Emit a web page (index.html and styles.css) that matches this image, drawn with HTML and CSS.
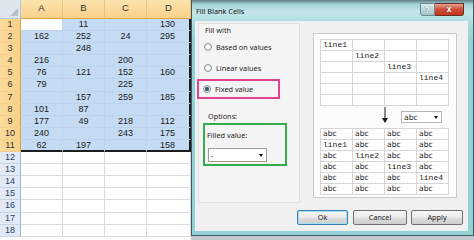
FILE: index.html
```html
<!DOCTYPE html>
<html>
<head>
<meta charset="utf-8">
<link rel="stylesheet" href="styles.css">
</head>
<body>
<div class="screen">
  <div class="sheet">
    <div class="corner"></div>
    <div class="ch">A</div><div class="ch">B</div><div class="ch">C</div><div class="ch">D</div>

    <div class="rh">1</div><div class="c s act"></div><div class="c s">11</div><div class="c s"></div><div class="c s r">130</div>
    <div class="rh">2</div><div class="c s">162</div><div class="c s">252</div><div class="c s">24</div><div class="c s r">295</div>
    <div class="rh">3</div><div class="c s"></div><div class="c s">248</div><div class="c s"></div><div class="c s r"></div>
    <div class="rh">4</div><div class="c s">216</div><div class="c s"></div><div class="c s">200</div><div class="c s r"></div>
    <div class="rh">5</div><div class="c s">76</div><div class="c s">121</div><div class="c s">152</div><div class="c s r">160</div>
    <div class="rh">6</div><div class="c s">79</div><div class="c s"></div><div class="c s">225</div><div class="c s r"></div>
    <div class="rh">7</div><div class="c s"></div><div class="c s">157</div><div class="c s">259</div><div class="c s r">185</div>
    <div class="rh">8</div><div class="c s">101</div><div class="c s">87</div><div class="c s"></div><div class="c s r"></div>
    <div class="rh">9</div><div class="c s">177</div><div class="c s">49</div><div class="c s">218</div><div class="c s r">112</div>
    <div class="rh">10</div><div class="c s">240</div><div class="c s"></div><div class="c s">243</div><div class="c s r">175</div>
    <div class="rh">11</div><div class="c s b">62</div><div class="c s b">197</div><div class="c s b"></div><div class="c s r b">158</div>
    <div class="rh u">12</div><div class="c"></div><div class="c"></div><div class="c"></div><div class="c"></div>
    <div class="rh u">13</div><div class="c"></div><div class="c"></div><div class="c"></div><div class="c"></div>
    <div class="rh u">14</div><div class="c"></div><div class="c"></div><div class="c"></div><div class="c"></div>
    <div class="rh u">15</div><div class="c"></div><div class="c"></div><div class="c"></div><div class="c"></div>
    <div class="rh u">16</div><div class="c"></div><div class="c"></div><div class="c"></div><div class="c"></div>
    <div class="rh u">17</div><div class="c"></div><div class="c"></div><div class="c"></div><div class="c"></div>
    <div class="rh u">18</div><div class="c"></div><div class="c"></div><div class="c"></div><div class="c"></div>
  </div>

  <div class="dlg">
    <div class="titlebar">
      <span class="title">Fill Blank Cells</span>
      <div class="caps"><span class="help">?</span><span class="close">x</span></div>
    </div>
    <div class="client">
      <div class="main">
        <div class="left">
          <div class="fw">Fill with</div>
          <div class="opt o1"><span class="rd"></span><span>Based on values</span></div>
          <div class="opt o2"><span class="rd"></span><span>Linear values</span></div>
          <div class="pink"><span class="rd on"></span><span>Fixed value</span></div>
          <div class="opts">Options:</div>
          <div class="green">
            <div class="flab">Filled value:</div>
            <div class="dd fdd"><span>-</span><span class="tri"></span></div>
          </div>
        </div>
        <div class="preview">
          <div class="tbl">
            <span class="m">line1</span><span></span><span></span><span></span>
            <span></span><span class="m">line2</span><span></span><span></span>
            <span></span><span></span><span class="m">line3</span><span></span>
            <span></span><span></span><span></span><span class="m">line4</span>
            <span></span><span></span><span></span><span></span>
            <span></span><span></span><span></span><span></span>
          </div>
          <div class="mid">
            <svg class="arrow" width="8" height="16" viewBox="0 0 8 16"><line x1="4" y1="0" x2="4" y2="12" stroke="#1a1a1a" stroke-width="1"/><polygon points="1,11 7,11 4,16" fill="#1a1a1a"/></svg>
            <div class="dd pdd"><span>abc</span><span class="tri"></span></div>
          </div>
          <div class="tbl">
            <span>abc</span><span>abc</span><span>abc</span><span>abc</span>
            <span class="m">line1</span><span>abc</span><span>abc</span><span>abc</span>
            <span>abc</span><span class="m">line2</span><span>abc</span><span>abc</span>
            <span>abc</span><span>abc</span><span class="m">line3</span><span>abc</span>
            <span>abc</span><span>abc</span><span>abc</span><span class="m">line4</span>
            <span>abc</span><span>abc</span><span>abc</span><span>abc</span>
          </div>
        </div>
      </div>
      <div class="buttons">
        <div class="btn def">Ok</div>
        <div class="btn cancel">Cancel</div>
        <div class="btn apply">Apply</div>
      </div>
    </div>
  </div>
</div>
</body>
</html>
```
FILE: styles.css
```css
* { box-sizing: border-box; margin: 0; padding: 0; }
body { margin: 0; width: 474px; height: 240px; overflow: hidden; background: #c4c9cd; }
.screen { display: flex; width: 474px; height: 240px; }

/* ---------- spreadsheet ---------- */
.sheet {
  width: 191px; height: 240px; flex: none;
  display: grid;
  grid-template-columns: 21px 42px 42px 42px 44px;
  grid-template-rows: 19px repeat(18, 12.1px);
  background: #fff;
  font-family: "Liberation Sans", Arial, sans-serif;
  font-size: 9px; color: #1a1a1a;
  overflow: hidden;
}
.corner { background: #dfe5ed; border-right: 1px solid #b5c3d4; border-bottom: 1px solid #b5c3d4; position: relative; }
.corner::after {
  content: ""; position: absolute; right: 2px; bottom: 2px; width: 0; height: 0;
  border-left: 8px solid transparent; border-bottom: 8px solid #b7c0ca;
}
.ch {
  background: linear-gradient(#fbe3ad, #f9d18b);
  border-right: 1px solid #e9c47a; border-bottom: 1px solid #d9a441;
  text-align: center; line-height: 16px; color: #333; font-size: 9.5px;
}
.rh {
  background: linear-gradient(90deg, #fbdc9c, #f8d086);
  border-right: 1px solid #d9a441; border-bottom: 1px solid #f3d08e;
  text-align: center; line-height: 11px; color: #333;
}
.rh.u { background: #e2eaf5; color: #27426d; border-bottom: 1px solid #c6d3e4; border-right: 1px solid #9fb5cf; }
.c { border-right: 1px solid #dadcdf; border-bottom: 1px solid #dadcdf; text-align: center; line-height: 11px; }
.c.s { background: #c5dbf3; border-color: #bed4ee; }
.c.s.act { background: #fff; }
.c.r { border-right-color: #1d1d1d; box-shadow: inset -1px 0 #1d1d1d; padding-right: 2px; }
.c.b { border-bottom-color: #1d1d1d; box-shadow: inset 0 -1px #1d1d1d; }
.c.r.b { box-shadow: inset -1px -1px #1d1d1d; }

/* ---------- dialog ---------- */
.dlg {
  width: 283px; height: 236px; flex: none;
  background: linear-gradient(#5d7a80 0, #9fd0d5 4px, #c6e7ea 12px, #acdce0 22px, #92d1d6 40px, #92d1d6 100%);
  border: 1px solid #3e5a5e; border-top: none;
  padding: 0 5px 4px 3px;
  display: flex; flex-direction: column;
  font-family: "Noto Sans", "DejaVu Sans", sans-serif;
  font-size: 7.3px; color: #1e1e1e;
}
.titlebar { height: 21px; display: flex; align-items: flex-start; flex: none; }
.title { padding: 6px 0 0 1px; line-height: 10px; color: #111; }
.caps { margin-left: auto; margin-top: 3px; margin-right: 4px; display: flex; }
.help {
  width: 15px; height: 13px; background: linear-gradient(#d6eaec, #a2c5c9);
  border: 1px solid #6a8b8f; border-radius: 0 0 0 3px;
  color: #fff; font-weight: bold; text-align: center; line-height: 11px; font-size: 8px;
  text-shadow: 0 0 1px #3b4b55;
}
.close {
  width: 29px; height: 13px; background: linear-gradient(#e9a495, #cc4a33 50%, #c23a22);
  border: 1px solid #6b2a20; border-left: none; border-radius: 0 0 3px 0;
  color: #fff; font-weight: bold; text-align: center; line-height: 10px; font-size: 8px;
  text-shadow: 0 0 1px #5a1a10;
}
.client { flex: 1; background: #f0f0f0; display: flex; flex-direction: column; }
.main { display: flex; padding-top: 2px; height: 182px; flex: none; }

.left { margin-left: 3px; width: 102px; height: 180px; border: 1px solid #e0e0e0; background: #f4f4f4; }
.fw { margin-top: 1px; padding-left: 6px; line-height: 10px; height: 10px; }
.opt { display: flex; align-items: center; gap: 4px; height: 10px; padding-left: 5px; }
.o1 { margin-top: 7px; }
.o2 { margin-top: 11px; }
.rd {
  width: 8px; height: 8px; border-radius: 50%; flex: none;
  border: 1px solid #8d9195;
  background: radial-gradient(circle, #ffffff 0, #e4e6e8 100%);
}
.rd.on { background: radial-gradient(circle, #2f5368 0, #3b6479 1.8px, #dfe6ea 2.4px, #eef1f3 100%); }
.pink {
  margin-top: 6px; margin-left: -2px; width: 83px; height: 20px;
  border: 2px solid #e2418f;
  display: flex; align-items: center; gap: 4px; padding-left: 4px;
}
.opts { margin-top: 12px; padding-left: 9px; line-height: 10px; height: 10px; }
.green {
  margin-top: 2px; margin-left: 4px; width: 84px; height: 43px;
  border: 2px solid #35ad4c;
}
.flab { margin-top: 5px; padding-left: 2px; line-height: 10px; height: 10px; }
.dd {
  display: flex; align-items: center; justify-content: space-between;
  background: #fff; border: 1px solid #ababab; padding: 0 3px 0 2px;
}
.fdd { margin-top: 8px; margin-left: 3px; width: 59px; height: 14px; border-color: #9c9c9c; }
.tri { width: 0; height: 0; border-left: 2.5px solid transparent; border-right: 2.5px solid transparent; border-top: 3px solid #111; }

.preview {
  margin-left: 13px; margin-top: 10px; width: 144px; height: 165px;
  border: 1px solid #cacaca; background: #fcfcfc; padding: 5px 0 0 6px;
}
.tbl {
  display: grid; grid-template-columns: repeat(4, 32px); grid-auto-rows: 11px;
  border-left: 1px solid #d6d6d6; border-top: 1px solid #d6d6d6;
  width: 129px; background: #fff;
}
.tbl span {
  border-right: 1px solid #d6d6d6; border-bottom: 1px solid #d6d6d6;
  padding-left: 2px; line-height: 10px; font-size: 7.6px;
  font-family: "DejaVu Sans", sans-serif; color: #222; white-space: nowrap; overflow: hidden;
}
.tbl span.m { font-family: "Liberation Mono", monospace; font-size: 8px; }
.mid { height: 22px; display: flex; align-items: flex-start; }
.arrow { margin-left: 61px; margin-top: 1px; flex: none; }
.pdd { margin-left: 12px; margin-top: 5px; width: 41px; height: 12px; border-color: #b5b5b5; font-family: "DejaVu Sans", sans-serif; font-size: 7.6px; }

.buttons { display: flex; justify-content: flex-end; margin-top: 7px; padding-right: 5px; }
.btn {
  height: 15px; border: 1px solid #707070; border-radius: 2px;
  background: linear-gradient(#f6f6f6 0, #ebebeb 50%, #dddddd 51%, #cfcfcf 100%);
  text-align: center; line-height: 13px;
}
.btn.def { width: 51px; border-color: #3c7fb1; box-shadow: inset 0 0 0 1px #a6e1f3; }
.btn.cancel { width: 54px; margin-left: 5px; }
.btn.apply { width: 52px; margin-left: 4px; }
```
